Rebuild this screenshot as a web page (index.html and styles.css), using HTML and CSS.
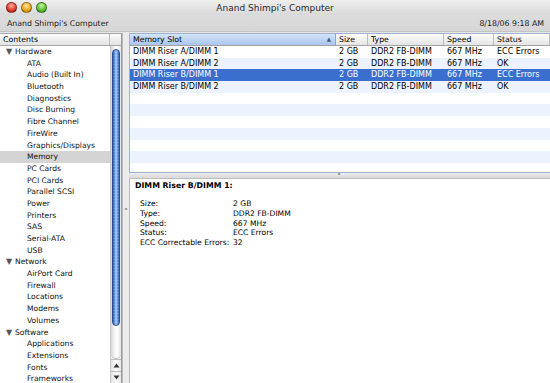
FILE: index.html
```html
<!DOCTYPE html>
<html lang="en">
<head>
  <meta charset="UTF-8">
  <title>Anand Shimpi's Computer</title>
  <link rel="stylesheet" href="styles.css">
</head>
<body>
  <div class="window">
    <div class="titlebar">
      <div class="lights">
        <span class="light red"></span>
        <span class="light yellow"></span>
        <span class="light green"></span>
      </div>
      <div class="title">Anand Shimpi's Computer</div>
    </div>
    <div class="infobar">
      <span>Anand Shimpi's Computer</span>
      <span>8/18/06 9:18 AM</span>
    </div>

    <div class="body">
      <div class="sidebar">
        <div class="source">
          <div class="head-row">
            <div class="head-cell">Contents</div>
            <div class="head-cell blank"></div>
          </div>
          <div class="source-wrap">
            <ul class="tree">
              <li class="group"><span class="tri">&#9660;</span>Hardware</li>
              <li>ATA</li>
              <li>Audio (Built In)</li>
              <li>Bluetooth</li>
              <li>Diagnostics</li>
              <li>Disc Burning</li>
              <li>Fibre Channel</li>
              <li>FireWire</li>
              <li>Graphics/Displays</li>
              <li class="current">Memory</li>
              <li>PC Cards</li>
              <li>PCI Cards</li>
              <li>Parallel SCSI</li>
              <li>Power</li>
              <li>Printers</li>
              <li>SAS</li>
              <li>Serial-ATA</li>
              <li>USB</li>
              <li class="group"><span class="tri">&#9660;</span>Network</li>
              <li>AirPort Card</li>
              <li>Firewall</li>
              <li>Locations</li>
              <li>Modems</li>
              <li>Volumes</li>
              <li class="group"><span class="tri">&#9660;</span>Software</li>
              <li>Applications</li>
              <li>Extensions</li>
              <li>Fonts</li>
              <li>Frameworks</li>
            </ul>
            <div class="scroller">
              <div class="track">
                <div class="thumb"></div>
              </div>
              <div class="arrow up"><svg width="7" height="5" viewBox="0 0 7 5"><path d="M3.5 0.5 L6.5 4.5 L0.5 4.5 Z" fill="#333"/></svg></div>
              <div class="arrow down"><svg width="7" height="5" viewBox="0 0 7 5"><path d="M0.5 0.5 L6.5 0.5 L3.5 4.5 Z" fill="#333"/></svg></div>
            </div>
          </div>
        </div>
      </div>

      <div class="vsplit"><span class="grip">&#708;</span></div>

      <div class="main">
        <div class="table">
          <div class="row thead">
            <div class="cell sorted">Memory Slot<span class="sort">&#9650;</span></div>
            <div class="cell">Size</div>
            <div class="cell">Type</div>
            <div class="cell">Speed</div>
            <div class="cell">Status</div>
          </div>
          <div class="rows">
            <div class="row">
              <div class="cell">DIMM Riser A/DIMM 1</div>
              <div class="cell">2 GB</div>
              <div class="cell">DDR2 FB-DIMM</div>
              <div class="cell">667 MHz</div>
              <div class="cell">ECC Errors</div>
            </div>
            <div class="row">
              <div class="cell">DIMM Riser A/DIMM 2</div>
              <div class="cell">2 GB</div>
              <div class="cell">DDR2 FB-DIMM</div>
              <div class="cell">667 MHz</div>
              <div class="cell">OK</div>
            </div>
            <div class="row selected">
              <div class="cell">DIMM Riser B/DIMM 1</div>
              <div class="cell">2 GB</div>
              <div class="cell">DDR2 FB-DIMM</div>
              <div class="cell">667 MHz</div>
              <div class="cell">ECC Errors</div>
            </div>
            <div class="row">
              <div class="cell">DIMM Riser B/DIMM 2</div>
              <div class="cell">2 GB</div>
              <div class="cell">DDR2 FB-DIMM</div>
              <div class="cell">667 MHz</div>
              <div class="cell">OK</div>
            </div>
            <div class="row empty"></div>
            <div class="row empty"></div>
            <div class="row empty"></div>
            <div class="row empty"></div>
            <div class="row empty"></div>
            <div class="row empty"></div>
            <div class="row empty"></div>
          </div>
        </div>

        <div class="hsplit"><span class="grip">&#708;</span></div>

        <div class="detail">
          <div class="detail-title">DIMM Riser B/DIMM 1:</div>
          <dl class="props">
            <dt>Size:</dt><dd>2 GB</dd>
            <dt>Type:</dt><dd>DDR2 FB-DIMM</dd>
            <dt>Speed:</dt><dd>667 MHz</dd>
            <dt>Status:</dt><dd>ECC Errors</dd>
            <dt>ECC Correctable Errors:</dt><dd>32</dd>
          </dl>
        </div>
      </div>
    </div>
  </div>
</body>
</html>
```

FILE: styles.css
```css
* {margin:0; padding:0; box-sizing:border-box;}
ul,li {list-style:none;}
html,body {width:550px; height:383px; overflow:hidden;}
body {font-family:"DejaVu Sans", "Noto Sans", sans-serif; color:#000; background:#e4e4e4;}

.window {display:flex; flex-direction:column; width:550px; height:383px; background:#e6e6e6;}

/* title bar */
.titlebar {position:relative; height:15px; display:flex; align-items:center; justify-content:center; background:linear-gradient(#eeeeee, #d9d9d9);}
.lights {position:absolute; left:6px; top:2px; display:flex; gap:4px;}
.light {width:11px; height:11px; border-radius:50%; border:1px solid rgba(0,0,0,.35);}
.light.red {background:radial-gradient(circle at 50% 30%, #ffb3a8, #e0372a 60%, #a31b12);}
.light.yellow {background:radial-gradient(circle at 50% 30%, #ffe7a0, #e9a41a 60%, #a8700c);}
.light.green {background:radial-gradient(circle at 50% 30%, #c8f5a8, #5cbf2f 60%, #2f7d13);}
.title {font-size:9px; color:#2a2a2a; padding-top:1px;}

.infobar {height:17px; display:flex; justify-content:space-between; align-items:center; padding:0 6px 0 7px; font-size:7.8px; color:#1a1a1a; background:linear-gradient(#dcdcdc, #d6d6d6); border-bottom:1px solid #c4c4c4;}

.body {flex:1; display:flex; padding-top:1px; min-height:0;}

/* source list */
.sidebar {width:122px; display:flex; flex-direction:column; background:#fff; border-top:1px solid #a8a8a8;}
.source {flex:1; display:flex; flex-direction:column; min-height:0;}
.head-row {display:flex; height:12px; border-bottom:1px solid #a8a8a8;}
.head-cell {flex:1; font-size:7.8px; line-height:11px; padding-left:3px; background:linear-gradient(#fbfbfb, #e2e2e2); border-right:1px solid #b8b8b8;}
.head-cell.blank {flex:0 0 12px; padding:0; border-right:1px solid #9a9a9a;}
.source-wrap {flex:1; display:flex; min-height:0;}
.tree {flex:1; overflow:hidden; font-size:7.6px; color:#111;}
.tree li {height:11.7px; line-height:11.7px; padding-left:27px; white-space:nowrap;}
.tree li.group {padding-left:6px;}
.tree li.current {background:#d4d4d4;}
.tri {display:inline-block; width:9px; font-size:8px; color:#555;}

.scroller {width:12px; display:flex; flex-direction:column; background:#f2f2f2; border-left:1px solid #c8c8c8; border-right:1px solid #9a9a9a;}
.track {flex:1; padding:3px 1px 0 1px; background:linear-gradient(90deg, #d8d8d8, #f7f7f7 40%, #ffffff 60%, #e4e4e4); border-radius:0 0 5px 5px; border-bottom:1px solid #bbb;}
.thumb {height:277px; border-radius:5px; background:repeating-linear-gradient(rgba(255,255,255,0) 0 2px, rgba(255,255,255,.12) 2px 3px), linear-gradient(90deg, #2753a8, #5d90dc 25%, #a8ccf6 50%, #6c9ee4 75%, #2a58ae); border:1px solid #2b4f96;}
.arrow {height:12px; display:flex; align-items:center; justify-content:center; background:linear-gradient(90deg, #e2e2e2, #fbfbfb 50%, #e6e6e6); border-top:1px solid #bdbdbd;}

/* splitters */
.vsplit {width:7px; display:flex; align-items:center; justify-content:center; background:#ebebeb; border-left:1px solid #bbb;}
.vsplit .grip {font-size:8px; color:#444; position:relative; top:4px;}
.hsplit {height:7px; display:flex; justify-content:flex-start; background:linear-gradient(#ececec, #d9d9d9); border-top:1px solid #9fb3cf; border-bottom:1px solid #bdbdbd;}
.hsplit .grip {font-size:8px; line-height:10px; color:#444; margin-left:208px;}

/* table */
.main {flex:1; display:flex; flex-direction:column; min-width:0;}
.table {height:139px; display:flex; flex-direction:column; border:1px solid #9fb3cf; border-right:0; border-bottom:0; background:#fff; overflow:hidden;}
.row {display:grid; grid-template-columns:206px 32px 76px 50px 1fr; height:11.7px; font-size:8px; line-height:11.7px;}
.rows .row:nth-child(even) {background:#edf3fe;}
.rows .row.selected {background:#3a6fd0; color:#fff;}
.cell {padding-left:3px; white-space:nowrap; overflow:hidden;}
.thead {height:12px; line-height:11px; border-bottom:1px solid #a3a3a3; font-size:7.8px;}
.thead .cell {background:linear-gradient(#fdfdfd, #e4e4e4); border-right:1px solid #bcbcbc;}
.thead .cell.sorted {display:flex; justify-content:space-between; background:linear-gradient(#d4e4f8, #a9c5ee); border-right:1px solid #8ea6cc;}
.sort {font-size:5.5px; color:#405a86; padding-right:4px;}

/* detail */
.detail {flex:1; background:#fff; border-left:1px solid #b8b8b8; padding:1px 0 0 5px;}
.detail-title {font-size:7.8px; font-weight:bold; line-height:11px;}
.props {display:grid; grid-template-columns:93px 1fr; margin:8px 0 0 5px; font-size:7.6px; line-height:9.8px;}
```
